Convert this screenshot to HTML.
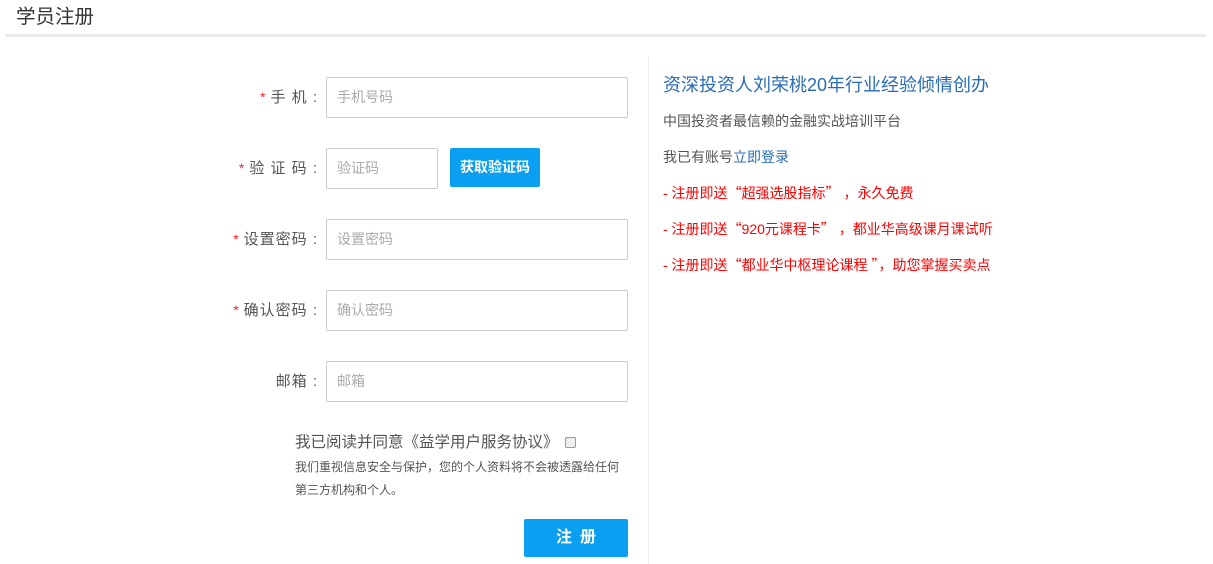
<!DOCTYPE html>
<html><head><meta charset="utf-8">
<style>
*{margin:0;padding:0;box-sizing:border-box}
body{width:1213px;height:564px;background:#fff;position:relative;overflow:hidden;font-family:"Liberation Sans","Noto Sans CJK SC",sans-serif;color:#555}
.a{position:absolute;white-space:nowrap}
.q{font-family:"Noto Sans CJK SC",sans-serif}
.title{left:16px;top:5px;font-size:19.5px;color:#333;line-height:24px}
.hr{left:5px;top:34px;width:1201px;height:3px;background:#ececec}
.vr{left:648px;top:57px;width:1px;height:507px;background:#eee}
.lab{right:895px;font-size:15px;color:#555;line-height:41px;letter-spacing:1px}
.lab b{color:#f22;font-weight:normal;margin-right:4px;font-size:14px}
.in{left:326px;width:302px;height:41px;border:1px solid #ccc;border-radius:2px;font-size:14px;color:#aaa;line-height:39px;padding-left:10px}
.btn{background:#0a9ff0;color:#fff;border-radius:2px;text-align:center}
.r{left:663px;font-size:14px;color:#555}
.red{color:#f00}
</style></head><body>
<div class="a title">学员注册</div>
<div class="a hr"></div>
<div class="a vr"></div>

<div class="a lab" style="top:77px"><b>*</b>手 机 :</div>
<div class="a in" style="top:77px">手机号码</div>

<div class="a lab" style="top:148px"><b>*</b>验 证 码 :</div>
<div class="a in" style="top:148px;width:112px">验证码</div>
<div class="a btn" style="left:450px;top:148px;width:90px;height:39px;line-height:39px;font-size:14px;font-weight:bold">获取验证码</div>

<div class="a lab" style="top:219px"><b>*</b>设置密码 :</div>
<div class="a in" style="top:219px">设置密码</div>

<div class="a lab" style="top:290px"><b>*</b>确认密码 :</div>
<div class="a in" style="top:290px">确认密码</div>

<div class="a lab" style="top:361px">邮箱 :</div>
<div class="a in" style="top:361px">邮箱</div>

<div class="a" style="left:295px;top:433px;font-size:15.5px;color:#555;line-height:20px">我已阅读并同意《益学用户服务协议》 <span style="display:inline-block;width:11px;height:11px;border:1px solid #999;border-radius:2px;background:#eee;vertical-align:-1px;margin-left:2px"></span></div>
<div class="a" style="left:295px;top:456px;font-size:12px;color:#555;line-height:23px;white-space:normal;width:335px">我们重视信息安全与保护，您的个人资料将不会被透露给任何<br>第三方机构和个人。</div>
<div class="a btn" style="left:524px;top:519px;width:104px;height:38px;line-height:38px;font-size:16px;font-weight:bold;letter-spacing:8px;text-indent:8px">注册</div>

<div class="a" style="left:663px;top:73px;font-size:18px;color:#2a6cb5;line-height:24px">资深投资人刘荣桃20年行业经验倾情创办</div>
<div class="a r" style="top:112px;line-height:18px">中国投资者最信赖的金融实战培训平台</div>
<div class="a r" style="top:148px;line-height:18px">我已有账号<span style="color:#2a6cb5">立即登录</span></div>
<div class="a r red" style="top:184px;line-height:18px">- 注册即送<span class="q">“</span>超强选股指标<span class="q">”</span> ，永久免费</div>
<div class="a r red" style="top:220px;line-height:18px">- 注册即送<span class="q">“</span>920元课程卡<span class="q">”</span> ，都业华高级课月课试听</div>
<div class="a r red" style="top:256px;line-height:18px">- 注册即送<span class="q">“</span>都业华中枢理论课程 <span class="q">”</span>，助您掌握买卖点</div>
</body></html>
